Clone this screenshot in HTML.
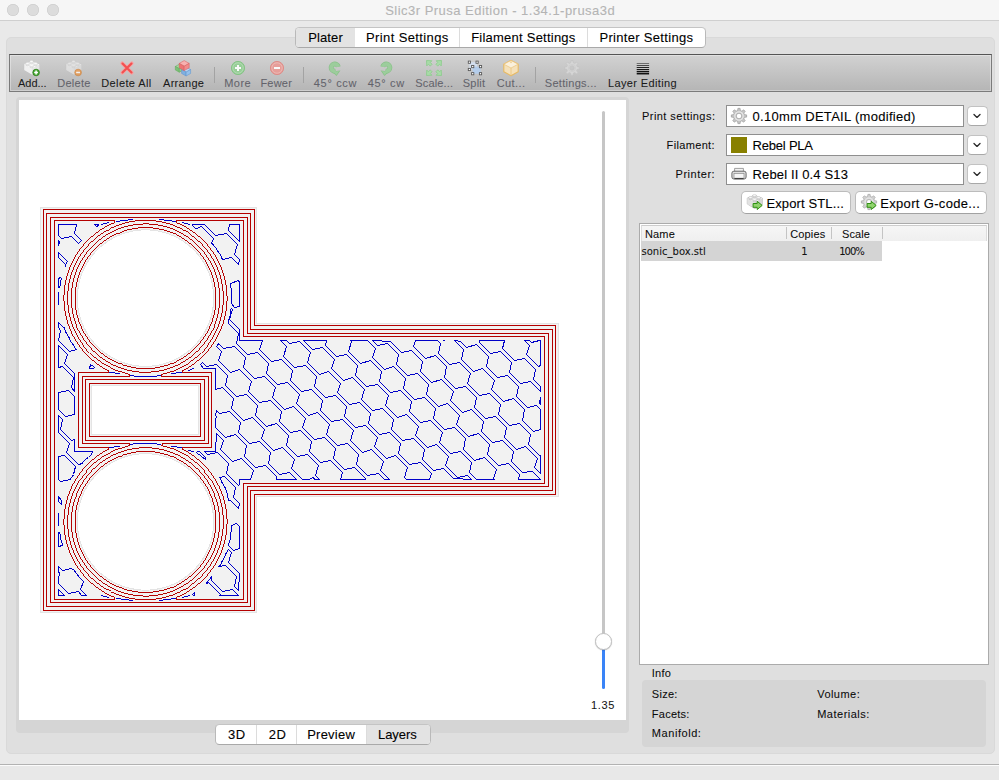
<!DOCTYPE html><html><head><meta charset="utf-8"><title>Slic3r Prusa Edition - 1.34.1-prusa3d</title><style>
html,body{margin:0;padding:0;}
body{width:999px;height:780px;overflow:hidden;background:#e9e9e9;font-family:'Liberation Sans', sans-serif;position:relative;color:#222;}
.abs{position:absolute;}
.t{position:absolute;white-space:nowrap;-webkit-text-stroke:0.06px currentColor;}
#titlebar{left:0;top:0;width:999px;height:20px;background:#f6f6f6;border-bottom:1px solid #cfcfcf;}
.tl{position:absolute;top:4px;width:12px;height:12px;border-radius:50%;background:#dcdcdc;box-shadow:inset 0 0 0 0.5px #c8c8c8;}
#panel{left:6px;top:37px;width:989px;height:717px;background:#dfdfdf;border:1px solid #d9d9d9;border-radius:5px;box-sizing:border-box;}
.segc{position:absolute;background:#fff;border:1px solid #b9b9b9;border-top-color:#c4c4c4;border-bottom-color:#a9a9a9;border-radius:4.5px;box-sizing:border-box;overflow:hidden;}
.seg{position:absolute;top:0;height:100%;box-sizing:border-box;}
.seg.sel{background:#e3e3e3;}
.seg.div{border-left:1px solid #dcdcdc;}
#toolbar{left:9px;top:54px;width:983px;height:38px;box-sizing:border-box;border:1px solid #7b7b7b;border-top-color:#555;background:linear-gradient(#d2d2d2,#b5b5b5);box-shadow:inset 0 0 0 1px rgba(255,255,255,.35);}
.tsep{position:absolute;top:67px;width:1px;height:16px;background:#a3a3a3;}
.ico{position:absolute;width:16px;height:16px;}
#gbox{left:16px;top:97px;width:613px;height:636px;background:#d5d5d5;border-radius:4px;}
#canvas{left:19px;top:100px;width:607px;height:620px;background:#fff;}
.combo{position:absolute;left:726px;width:238px;height:22px;box-sizing:border-box;border:1px solid #8f8f8f;background:#fff;}
.dd{position:absolute;left:967.4px;width:20.3px;height:20px;box-sizing:border-box;border:1px solid #c2c2c2;border-bottom-color:#a8a8a8;border-radius:4.5px;background:#fff;}
.btn{position:absolute;top:190.7px;height:23.5px;box-sizing:border-box;border:1px solid #bcbcbc;border-bottom-color:#a2a2a2;border-radius:5px;background:#fff;}
#list{left:639px;top:223.2px;width:350px;height:442px;box-sizing:border-box;border:1px solid #ababab;background:#fff;}
#lhead{left:641px;top:225px;width:346px;height:16.3px;background:linear-gradient(#f6f6f6,#efefef);border-top:1px solid #cdcdcd;border-left:1px solid #dcdcdc;border-right:1px solid #dcdcdc;box-sizing:border-box;}
.hsep{position:absolute;top:227px;width:1px;height:12px;background:#c4c4c4;}
#row{left:641px;top:241.3px;width:241px;height:19.5px;background:#d4d4d4;}
#info{left:642px;top:680px;width:344px;height:67px;background:#d5d5d5;border-radius:4px;}
#statusline{left:0;top:764px;width:999px;height:1px;background:#b2b2b2;border-bottom:1px solid #fbfbfb;}
#status{left:0;top:766px;width:999px;height:14px;background:#e8e8e8;}
</style></head><body>
<div id="titlebar" class="abs"><div class="tl" style="left:7px"></div><div class="tl" style="left:27px"></div><div class="tl" style="left:47px"></div></div>
<div id="title" class="t" style="left:385.20px;top:2.00px;font:13px/17px 'Liberation Sans', sans-serif;color:#b4b4b4;letter-spacing:0.475px;-webkit-text-stroke-width:0.1px;">Slic3r Prusa Edition - 1.34.1-prusa3d</div>
<div id="panel" class="abs"></div>
<div class="segc abs" style="left:295.4px;top:27px;width:411px;height:20.5px">
<div class="seg sel" style="left:0;width:58.5px"></div>
<div class="seg div" style="left:163px;width:1px"></div>
<div class="seg div" style="left:291px;width:1px"></div>
</div>
<div id="tab0" class="t" style="left:308.20px;top:29.00px;font:13px/17px 'Liberation Sans', sans-serif;color:#000;letter-spacing:0.126px;-webkit-text-stroke-width:0.1px;">Plater</div>
<div id="tab1" class="t" style="left:366.00px;top:29.00px;font:13px/17px 'Liberation Sans', sans-serif;color:#000;letter-spacing:0.381px;-webkit-text-stroke-width:0.1px;">Print Settings</div>
<div id="tab2" class="t" style="left:471.20px;top:29.00px;font:13px/17px 'Liberation Sans', sans-serif;color:#000;letter-spacing:0.231px;-webkit-text-stroke-width:0.1px;">Filament Settings</div>
<div id="tab3" class="t" style="left:599.40px;top:29.00px;font:13px/17px 'Liberation Sans', sans-serif;color:#000;letter-spacing:0.318px;-webkit-text-stroke-width:0.1px;">Printer Settings</div>
<div id="toolbar" class="abs"></div>
<div id="tb0" class="t" style="left:18.00px;top:75.89px;font:11px/14px 'Liberation Sans', sans-serif;color:#1a1a1a;letter-spacing:-0.018px;">Add...</div>
<div class="ico" style="left:24.4px;top:60px"><svg width="16" height="16" viewBox="0 0 16 16" style="position:absolute;left:0;top:0;overflow:visible;"><g opacity="1"><path d="M0.3 4.0 L7.5 1.4 L15.3 4.2 L15.3 10.5 L7.9 14.6 L0.3 9.9Z" fill="#f6f6f6" stroke="#c2c2c2" stroke-width="0.7" stroke-linejoin="round"/><path d="M0.3 4.0 L7.9 8.0 L7.9 14.6 L0.3 9.9Z" fill="#f0f0f0"/><path d="M7.9 8.0 L15.3 4.2 L15.3 10.5 L7.9 14.6Z" fill="#e6e6e6"/><path d="M0.3 4.0 L7.5 1.4 L15.3 4.2 L7.9 8.0Z" fill="#fdfdfd"/><path d="M5.75 1.3 v1.5 a1.75 0.85 0 0 0 3.5 0 v-1.5z" fill="#e4e4e4" stroke="#c4c4c4" stroke-width="0.4"/><ellipse cx="7.5" cy="1.3" rx="1.75" ry="0.85" fill="#ffffff" stroke="#d2d2d2" stroke-width="0.35"/><path d="M1.75 3.3 v1.5 a1.75 0.85 0 0 0 3.5 0 v-1.5z" fill="#e4e4e4" stroke="#c4c4c4" stroke-width="0.4"/><ellipse cx="3.5" cy="3.3" rx="1.75" ry="0.85" fill="#ffffff" stroke="#d2d2d2" stroke-width="0.35"/><path d="M9.85 3.4 v1.5 a1.75 0.85 0 0 0 3.5 0 v-1.5z" fill="#e4e4e4" stroke="#c4c4c4" stroke-width="0.4"/><ellipse cx="11.6" cy="3.4" rx="1.75" ry="0.85" fill="#ffffff" stroke="#d2d2d2" stroke-width="0.35"/><path d="M5.85 5.5 v1.5 a1.75 0.85 0 0 0 3.5 0 v-1.5z" fill="#e4e4e4" stroke="#c4c4c4" stroke-width="0.4"/><ellipse cx="7.6" cy="5.5" rx="1.75" ry="0.85" fill="#ffffff" stroke="#d2d2d2" stroke-width="0.35"/></g><circle cx="12.1" cy="12.5" r="3.3" fill="#46a833" stroke="#2d7f1c" stroke-width="0.8"/><path d="M10.186 12.5H14.014" stroke="#fff" stroke-width="1.5"/><path d="M12.1 10.586V14.414" stroke="#fff" stroke-width="1.5"/></svg></div>
<div id="tb1" class="t" style="left:57.20px;top:75.89px;font:11px/14px 'Liberation Sans', sans-serif;color:#63636b;letter-spacing:0.288px;">Delete</div>
<div class="ico" style="left:65.9px;top:60px"><svg width="16" height="16" viewBox="0 0 16 16" style="position:absolute;left:0;top:0;overflow:visible;"><g opacity="0.55"><path d="M0.3 4.0 L7.5 1.4 L15.3 4.2 L15.3 10.5 L7.9 14.6 L0.3 9.9Z" fill="#f6f6f6" stroke="#c2c2c2" stroke-width="0.7" stroke-linejoin="round"/><path d="M0.3 4.0 L7.9 8.0 L7.9 14.6 L0.3 9.9Z" fill="#f0f0f0"/><path d="M7.9 8.0 L15.3 4.2 L15.3 10.5 L7.9 14.6Z" fill="#e6e6e6"/><path d="M0.3 4.0 L7.5 1.4 L15.3 4.2 L7.9 8.0Z" fill="#fdfdfd"/><path d="M5.75 1.3 v1.5 a1.75 0.85 0 0 0 3.5 0 v-1.5z" fill="#e4e4e4" stroke="#c4c4c4" stroke-width="0.4"/><ellipse cx="7.5" cy="1.3" rx="1.75" ry="0.85" fill="#ffffff" stroke="#d2d2d2" stroke-width="0.35"/><path d="M1.75 3.3 v1.5 a1.75 0.85 0 0 0 3.5 0 v-1.5z" fill="#e4e4e4" stroke="#c4c4c4" stroke-width="0.4"/><ellipse cx="3.5" cy="3.3" rx="1.75" ry="0.85" fill="#ffffff" stroke="#d2d2d2" stroke-width="0.35"/><path d="M9.85 3.4 v1.5 a1.75 0.85 0 0 0 3.5 0 v-1.5z" fill="#e4e4e4" stroke="#c4c4c4" stroke-width="0.4"/><ellipse cx="11.6" cy="3.4" rx="1.75" ry="0.85" fill="#ffffff" stroke="#d2d2d2" stroke-width="0.35"/><path d="M5.85 5.5 v1.5 a1.75 0.85 0 0 0 3.5 0 v-1.5z" fill="#e4e4e4" stroke="#c4c4c4" stroke-width="0.4"/><ellipse cx="7.6" cy="5.5" rx="1.75" ry="0.85" fill="#ffffff" stroke="#d2d2d2" stroke-width="0.35"/></g><g opacity="0.75"><circle cx="12.1" cy="12.5" r="3.3" fill="#e8913f" stroke="#cf7a2a" stroke-width="0.8"/><path d="M10.186 12.5H14.014" stroke="#fff" stroke-width="1.5"/></g></svg></div>
<div id="tb2" class="t" style="left:101.20px;top:75.89px;font:11px/14px 'Liberation Sans', sans-serif;color:#1a1a1a;letter-spacing:0.400px;">Delete All</div>
<div class="ico" style="left:119.0px;top:60px"><svg width="16" height="16" viewBox="0 0 16 16" style="position:absolute;left:0;top:0;overflow:visible;"><path d="M3.2 3.2 L12.8 12.8 M12.8 3.2 L3.2 12.8" stroke="#f8a0a0" stroke-width="3.6" stroke-linecap="round"/><path d="M3.5 3.5 L12.5 12.5 M12.5 3.5 L3.5 12.5" stroke="#f25050" stroke-width="2.1" stroke-linecap="round"/></svg></div>
<div id="tb3" class="t" style="left:163.00px;top:75.89px;font:11px/14px 'Liberation Sans', sans-serif;color:#1a1a1a;letter-spacing:0.300px;">Arrange</div>
<div class="ico" style="left:175.0px;top:60px"><svg width="16" height="16" viewBox="0 0 16 16" style="position:absolute;left:0;top:0;overflow:visible;"><path d="M0.3 6.44 L4.3 4.2 L8.3 6.44 L4.3 8.68Z" fill="#a5d6a0" stroke="#5da858" stroke-width="0.5" stroke-linejoin="round"/><path d="M0.3 6.44 L4.3 8.68 L4.3 12.2 L0.3 9.959999999999999Z" fill="#7cc077" stroke="#5da858" stroke-width="0.5" stroke-linejoin="round"/><path d="M8.3 6.44 L4.3 8.68 L4.3 12.2 L8.3 9.959999999999999Z" fill="#8fcc8a" stroke="#5da858" stroke-width="0.5" stroke-linejoin="round"/><path d="M6.6 9.52 L11.1 7.0 L15.6 9.52 L11.1 12.040000000000001Z" fill="#b9d6f2" stroke="#5d93cc" stroke-width="0.5" stroke-linejoin="round"/><path d="M6.6 9.52 L11.1 12.040000000000001 L11.1 16.0 L6.6 13.48Z" fill="#7fb0e0" stroke="#5d93cc" stroke-width="0.5" stroke-linejoin="round"/><path d="M15.6 9.52 L11.1 12.040000000000001 L11.1 16.0 L15.6 13.48Z" fill="#96c0ea" stroke="#5d93cc" stroke-width="0.5" stroke-linejoin="round"/><path d="M4.2 3.4000000000000004 L9.2 0.6 L14.2 3.4000000000000004 L9.2 6.2Z" fill="#f7b1b1" stroke="#d85a5a" stroke-width="0.5" stroke-linejoin="round"/><path d="M4.2 3.4000000000000004 L9.2 6.2 L9.2 10.6 L4.2 7.799999999999999Z" fill="#ec7474" stroke="#d85a5a" stroke-width="0.5" stroke-linejoin="round"/><path d="M14.2 3.4000000000000004 L9.2 6.2 L9.2 10.6 L14.2 7.799999999999999Z" fill="#f18c8c" stroke="#d85a5a" stroke-width="0.5" stroke-linejoin="round"/></svg></div>
<div id="tb4" class="t" style="left:224.20px;top:75.89px;font:11px/14px 'Liberation Sans', sans-serif;color:#63636b;letter-spacing:0.480px;">More</div>
<div class="ico" style="left:230.0px;top:60px"><svg width="16" height="16" viewBox="0 0 16 16" style="position:absolute;left:0;top:0;overflow:visible;"><g opacity="0.9"><circle cx="8" cy="8" r="6.6" fill="#93cf93" stroke="#7fc37f" stroke-width="1"/><circle cx="8" cy="8" r="5.2" fill="none" stroke="#b5e0b5" stroke-width="0.8"/><path d="M5 8H11M8 5V11" stroke="#fff" stroke-width="2"/></g></svg></div>
<div id="tb5" class="t" style="left:260.40px;top:75.89px;font:11px/14px 'Liberation Sans', sans-serif;color:#63636b;letter-spacing:0.225px;">Fewer</div>
<div class="ico" style="left:269.0px;top:60px"><svg width="16" height="16" viewBox="0 0 16 16" style="position:absolute;left:0;top:0;overflow:visible;"><g opacity="0.9"><circle cx="8" cy="8" r="6.6" fill="#ea9a95" stroke="#e08883" stroke-width="1"/><circle cx="8" cy="8" r="5.2" fill="none" stroke="#f3bcb8" stroke-width="0.8"/><path d="M5 8H11" stroke="#fff" stroke-width="2"/></g></svg></div>
<div id="tb6" class="t" style="left:313.80px;top:75.89px;font:11px/14px 'Liberation Sans', sans-serif;color:#63636b;letter-spacing:0.675px;">45° ccw</div>
<div class="ico" style="left:327.0px;top:60px"><svg width="16" height="16" viewBox="0 0 16 16" style="position:absolute;left:0;top:0;overflow:visible;"><g ><path d="M11.29 6.73 A3.6 3.6 0 1 0 8.73 11.08" fill="none" stroke="#88c088" stroke-width="4.9"/><path d="M5.0 11.4 L13.4 10.4 L9.5 16.0Z" fill="#88c088"/><path d="M11.29 6.73 A3.6 3.6 0 1 0 8.73 11.08" fill="none" stroke="#9ccd9c" stroke-width="3.7"/><path d="M6.2 11.8 L12.2 11.0 L9.45 15.0Z" fill="#9ccd9c"/></g></svg></div>
<div id="tb7" class="t" style="left:367.84px;top:75.89px;font:11px/14px 'Liberation Sans', sans-serif;color:#63636b;letter-spacing:0.648px;">45° cw</div>
<div class="ico" style="left:378.0px;top:60px"><svg width="16" height="16" viewBox="0 0 16 16" style="position:absolute;left:0;top:0;overflow:visible;"><g transform="translate(16,0) scale(-1,1)"><path d="M11.29 6.73 A3.6 3.6 0 1 0 8.73 11.08" fill="none" stroke="#88c088" stroke-width="4.9"/><path d="M5.0 11.4 L13.4 10.4 L9.5 16.0Z" fill="#88c088"/><path d="M11.29 6.73 A3.6 3.6 0 1 0 8.73 11.08" fill="none" stroke="#9ccd9c" stroke-width="3.7"/><path d="M6.2 11.8 L12.2 11.0 L9.45 15.0Z" fill="#9ccd9c"/></g></svg></div>
<div id="tb8" class="t" style="left:415.20px;top:75.89px;font:11px/14px 'Liberation Sans', sans-serif;color:#63636b;letter-spacing:0.180px;">Scale...</div>
<div class="ico" style="left:426.0px;top:60px"><svg width="16" height="16" viewBox="0 0 16 16" style="position:absolute;left:0;top:0;overflow:visible;"><g transform="rotate(45 8 8)"><path d="M8 -2.6 L11.6 1.4 H9.3 V4.0 H6.7 V1.4 H4.4Z" fill="#a9dba9" stroke="#86cc86" stroke-width="0.7" stroke-linejoin="round"/></g><g transform="rotate(135 8 8)"><path d="M8 -2.6 L11.6 1.4 H9.3 V4.0 H6.7 V1.4 H4.4Z" fill="#a9dba9" stroke="#86cc86" stroke-width="0.7" stroke-linejoin="round"/></g><g transform="rotate(225 8 8)"><path d="M8 -2.6 L11.6 1.4 H9.3 V4.0 H6.7 V1.4 H4.4Z" fill="#a9dba9" stroke="#86cc86" stroke-width="0.7" stroke-linejoin="round"/></g><g transform="rotate(315 8 8)"><path d="M8 -2.6 L11.6 1.4 H9.3 V4.0 H6.7 V1.4 H4.4Z" fill="#a9dba9" stroke="#86cc86" stroke-width="0.7" stroke-linejoin="round"/></g></svg></div>
<div id="tb9" class="t" style="left:462.80px;top:75.89px;font:11px/14px 'Liberation Sans', sans-serif;color:#63636b;letter-spacing:0.225px;">Split</div>
<div class="ico" style="left:467.0px;top:60px"><svg width="16" height="16" viewBox="0 0 16 16" style="position:absolute;left:0;top:0;overflow:visible;"><rect x="2.4" y="2.2" width="7.7" height="7.3" fill="#d3e0f2" opacity="0.9"/><rect x="5.7" y="6.6" width="7.8" height="7.1" fill="#b4cdeb"/><rect x="1.2999999999999998" y="1.1" width="2.2" height="2.2" fill="#fff" stroke="#5a5a5a" stroke-width="0.9"/><rect x="9.0" y="1.1" width="2.2" height="2.2" fill="#fff" stroke="#5a5a5a" stroke-width="0.9"/><rect x="1.2999999999999998" y="8.4" width="2.2" height="2.2" fill="#fff" stroke="#5a5a5a" stroke-width="0.9"/><rect x="4.6" y="5.5" width="2.2" height="2.2" fill="#fff" stroke="#5a5a5a" stroke-width="0.9"/><rect x="12.4" y="5.5" width="2.2" height="2.2" fill="#fff" stroke="#5a5a5a" stroke-width="0.9"/><rect x="4.6" y="12.6" width="2.2" height="2.2" fill="#fff" stroke="#5a5a5a" stroke-width="0.9"/><rect x="12.4" y="12.6" width="2.2" height="2.2" fill="#fff" stroke="#5a5a5a" stroke-width="0.9"/></svg></div>
<div id="tb10" class="t" style="left:496.76px;top:75.89px;font:11px/14px 'Liberation Sans', sans-serif;color:#63636b;letter-spacing:0.396px;">Cut...</div>
<div class="ico" style="left:502.8px;top:60px"><svg width="16" height="16" viewBox="0 0 16 16" style="position:absolute;left:0;top:0;overflow:visible;"><g opacity="0.95"><path d="M8 0.4 L15.2 4.2 V11.8 L8 15.8 L0.8 11.8 V4.2Z" fill="#f8e3bb" stroke="#e9b95f" stroke-width="1.1" stroke-linejoin="round"/><path d="M0.8 4.2 L8 8 L15.2 4.2 L8 0.4Z" fill="#fdf3df" stroke="#ecc377" stroke-width="0.7" stroke-linejoin="round"/><path d="M8 8V15.8" stroke="#ecc377" stroke-width="0.8"/><path d="M6.4 1.4 L8 3.4 L9.6 1.4" fill="#f1cf8c"/></g></svg></div>
<div id="tb11" class="t" style="left:544.80px;top:75.89px;font:11px/14px 'Liberation Sans', sans-serif;color:#63636b;letter-spacing:0.288px;">Settings...</div>
<div class="ico" style="left:564.2px;top:60px"><svg width="16" height="16" viewBox="0 0 16 16" style="position:absolute;left:0;top:0;overflow:visible;"><path d="M6.74 2.75 L6.96 0.67 L9.04 0.67 L9.26 2.75 L10.82 3.40 L12.44 2.08 L13.92 3.56 L12.60 5.18 L13.25 6.74 L15.33 6.96 L15.33 9.04 L13.25 9.26 L12.60 10.82 L13.92 12.44 L12.44 13.92 L10.82 12.60 L9.26 13.25 L9.04 15.33 L6.96 15.33 L6.74 13.25 L5.18 12.60 L3.56 13.92 L2.08 12.44 L3.40 10.82 L2.75 9.26 L0.67 9.04 L0.67 6.96 L2.75 6.74 L3.40 5.18 L2.08 3.56 L3.56 2.08 L5.18 3.40ZM10.3 8A2.3 2.3 0 1 0 5.7 8A2.3 2.3 0 1 0 10.3 8Z" fill="#d6d6d6" stroke="#c3c3c3" stroke-width="0.7" fill-rule="evenodd" stroke-linejoin="round"/><circle cx="8" cy="8" r="3.5999999999999996" fill="none" stroke="#c9c9c9" stroke-width="0.6"/></svg></div>
<div id="tb12" class="t" style="left:608.00px;top:75.89px;font:11px/14px 'Liberation Sans', sans-serif;color:#1a1a1a;letter-spacing:0.368px;">Layer Editing</div>
<div class="ico" style="left:635.0px;top:60px"><svg width="16" height="16" viewBox="0 0 16 16" style="position:absolute;left:0;top:0;overflow:visible;"><rect x="1.7" y="3.15" width="12.4" height="0.5" fill="#111"/><rect x="1.7" y="5.11" width="12.4" height="0.7" fill="#111"/><rect x="1.7" y="7.07" width="12.4" height="0.9" fill="#111"/><rect x="1.7" y="9.03" width="12.4" height="1.1" fill="#111"/><rect x="1.7" y="10.99" width="12.4" height="1.3" fill="#111"/><rect x="1.7" y="12.95" width="12.4" height="1.5" fill="#111"/></svg></div>
<div class="tsep" style="left:213.7px"></div>
<div class="tsep" style="left:303.2px"></div>
<div class="tsep" style="left:535.3px"></div>
<div id="gbox" class="abs"></div><div id="canvas" class="abs"></div>
<svg class="abs" style="left:0;top:0" width="999" height="780" viewBox="0 0 999 780" shape-rendering="crispEdges">
<path d="M40.9,612.5 256.8,612.5 256.8,496.5 558.2,496.5 558.2,323.4 256.8,323.4 256.8,207.4 40.9,207.4ZM213.7,298.1 213.6,302.6 213.1,307 212.4,311.4 211.4,315.8 210.1,320 208.5,324.2 206.7,328.3 204.6,332.2 202.2,336 199.6,339.6 196.8,343.1 193.7,346.3 190.5,349.4 187,352.2 183.4,354.8 179.6,357.2 175.7,359.3 171.6,361.1 167.4,362.7 163.2,364 158.8,365 154.4,365.7 150,366.2 145.5,366.3 141,366.2 136.6,365.7 132.2,365 127.8,364 123.6,362.7 119.4,361.1 115.3,359.3 111.4,357.2 107.6,354.8 104,352.2 100.5,349.4 97.3,346.3 94.2,343.1 91.4,339.6 88.8,336 86.4,332.2 84.3,328.3 82.5,324.2 80.9,320 79.6,315.8 78.6,311.4 77.9,307 77.4,302.6 77.3,298.1 77.4,293.6 77.9,289.2 78.6,284.8 79.6,280.4 80.9,276.2 82.5,272 84.3,267.9 86.4,264 88.8,260.2 91.4,256.6 94.2,253.1 97.3,249.9 100.5,246.8 104,244 107.6,241.4 111.4,239 115.3,236.9 119.4,235.1 123.6,233.5 127.8,232.2 132.2,231.2 136.6,230.5 141,230 145.5,229.9 150,230 154.4,230.5 158.8,231.2 163.2,232.2 167.4,233.5 171.6,235.1 175.7,236.9 179.6,239 183.4,241.4 187,244 190.5,246.8 193.7,249.9 196.8,253.1 199.6,256.6 202.2,260.2 204.6,264 206.7,267.9 208.5,272 210.1,276.2 211.4,280.4 212.4,284.8 213.1,289.2 213.6,293.6ZM91.8,385.8 198.6,385.8 198.6,434.2 91.8,434.2ZM213.6,517.4 213.7,521.9 213.6,526.4 213.1,530.8 212.4,535.2 211.4,539.6 210.1,543.8 208.5,548 206.7,552.1 204.6,556 202.2,559.8 199.6,563.4 196.8,566.9 193.7,570.1 190.5,573.2 187,576 183.4,578.6 179.6,581 175.7,583.1 171.6,584.9 167.4,586.5 163.2,587.8 158.8,588.8 154.4,589.5 150,590 145.5,590.1 141,590 136.6,589.5 132.2,588.8 127.8,587.8 123.6,586.5 119.4,584.9 115.3,583.1 111.4,581 107.6,578.6 104,576 100.5,573.2 97.3,570.1 94.2,566.9 91.4,563.4 88.8,559.8 86.4,556 84.3,552.1 82.5,548 80.9,543.8 79.6,539.6 78.6,535.2 77.9,530.8 77.4,526.4 77.3,521.9 77.4,517.4 77.9,513 78.6,508.6 79.6,504.2 80.9,500 82.5,495.8 84.3,491.7 86.4,487.8 88.8,484 91.4,480.4 94.2,476.9 97.3,473.7 100.5,470.6 104,467.8 107.6,465.2 111.4,462.8 115.3,460.7 119.4,458.9 123.6,457.3 127.8,456 132.2,455 136.6,454.3 141,453.8 145.5,453.7 150,453.8 154.4,454.3 158.8,455 163.2,456 167.4,457.3 171.6,458.9 175.7,460.7 179.6,462.8 183.4,465.2 187,467.8 190.5,470.6 193.7,473.7 196.8,476.9 199.6,480.4 202.2,484 204.6,487.8 206.7,491.7 208.5,495.8 210.1,500 211.4,504.2 212.4,508.6 213.1,513Z" fill="#f2f2f2" stroke="#e4e4e4" stroke-width="1" fill-rule="evenodd"/>
<path d="M61.5,504.5 61.5,502.5 61.5,500.5 58.5,496.5 58.5,501.5ZM62.5,545.5 62.5,544.5 61.5,541.5 60.5,538.5 60.5,535.5 59.5,532.5 58.5,532.5 58.5,546.5ZM59.5,573.5 58.5,579.5 58.5,583.5 68.5,593.5 78.5,591.5 81.5,595.5 86.5,595.5 80.5,589.5 83.5,581.5 82.5,580.5 80.5,578.5 78.5,576.5 77.5,574.5 75.5,572.5 74.5,570.5 71.5,568.5 62.5,570.5 58.5,566.5 58.5,571.5ZM58.5,589.5 58.5,595.5 64.5,595.5ZM529.5,345.5 526.5,354.5 538.5,366.5 540.5,365.5 540.5,340.5 539.5,340.5 531.5,342.5 529.5,340.5 524.5,340.5ZM479.5,342.5 490.5,353.5 500.5,351.5 511.5,362.5 509.5,372.5 520.5,383.5 530.5,381.5 540.5,391.5 540.5,386.5 533.5,379.5 535.5,369.5 524.5,358.5 514.5,360.5 502.5,348.5 504.5,340.5 479.5,340.5ZM539.5,402.5 540.5,404.5 540.5,397.5ZM442.5,340.5 444.5,340.5ZM463.5,349.5 461.5,359.5 473.5,371.5 482.5,368.5 494.5,380.5 491.5,389.5 503.5,401.5 513.5,398.5 524.5,409.5 522.5,420.5 533.5,431.5 540.5,429.5 540.5,409.5 536.5,405.5 527.5,407.5 516.5,396.5 518.5,386.5 507.5,375.5 497.5,377.5 486.5,366.5 488.5,356.5 476.5,344.5 466.5,347.5 460.5,341.5 454.5,340.5ZM413.5,346.5 425.5,358.5 435.5,355.5 446.5,366.5 444.5,377.5 455.5,388.5 465.5,386.5 476.5,397.5 474.5,407.5 485.5,418.5 495.5,416.5 506.5,427.5 504.5,437.5 516.5,449.5 525.5,446.5 537.5,458.5 534.5,467.5 540.5,473.5 540.5,455.5 539.5,455.5 528.5,444.5 530.5,434.5 519.5,423.5 509.5,425.5 498.5,414.5 500.5,404.5 489.5,393.5 479.5,395.5 467.5,383.5 470.5,373.5 459.5,362.5 449.5,364.5 438.5,353.5 440.5,343.5 437.5,340.5 415.5,340.5ZM377.5,345.5 387.5,343.5 398.5,354.5 396.5,364.5 407.5,375.5 417.5,373.5 428.5,384.5 426.5,394.5 438.5,406.5 447.5,403.5 459.5,415.5 456.5,424.5 468.5,436.5 478.5,433.5 489.5,444.5 487.5,454.5 498.5,465.5 508.5,463.5 519.5,474.5 518.5,479.5 540.5,479.5 532.5,471.5 522.5,472.5 511.5,461.5 513.5,451.5 502.5,440.5 492.5,442.5 481.5,431.5 483.5,421.5 471.5,409.5 462.5,412.5 450.5,400.5 453.5,391.5 441.5,379.5 431.5,382.5 420.5,371.5 422.5,361.5 411.5,350.5 401.5,352.5 390.5,341.5 372.5,340.5ZM228.5,230.5 239.5,241.5 239.5,224.5 229.5,224.5ZM351.5,341.5 348.5,351.5 360.5,363.5 370.5,360.5 381.5,371.5 379.5,381.5 390.5,392.5 400.5,390.5 411.5,401.5 409.5,411.5 420.5,422.5 430.5,420.5 442.5,432.5 439.5,442.5 450.5,453.5 460.5,451.5 471.5,462.5 469.5,472.5 476.5,479.5 494.5,479.5 493.5,478.5 496.5,469.5 484.5,457.5 474.5,460.5 463.5,449.5 465.5,438.5 454.5,427.5 444.5,429.5 433.5,418.5 435.5,408.5 424.5,397.5 414.5,399.5 403.5,388.5 405.5,378.5 393.5,366.5 384.5,369.5 372.5,357.5 375.5,348.5 367.5,340.5 350.5,340.5ZM201.5,226.5 213.5,238.5 211.5,243.5 212.5,243.5 213.5,245.5 215.5,247.5 217.5,250.5 218.5,252.5 220.5,254.5 221.5,257.5 222.5,259.5 231.5,257.5 238.5,264.5 239.5,259.5 234.5,254.5 237.5,244.5 226.5,233.5 215.5,235.5 204.5,224.5 192.5,224.5 192.5,225.5 195.5,228.5 196.5,228.5ZM312.5,349.5 322.5,347.5 334.5,359.5 331.5,368.5 343.5,380.5 352.5,377.5 364.5,389.5 361.5,399.5 372.5,410.5 382.5,408.5 393.5,419.5 391.5,429.5 402.5,440.5 413.5,438.5 424.5,449.5 422.5,459.5 433.5,470.5 443.5,468.5 453.5,478.5 471.5,479.5 467.5,475.5 457.5,477.5 445.5,465.5 448.5,456.5 436.5,444.5 427.5,447.5 415.5,435.5 418.5,426.5 406.5,414.5 397.5,417.5 385.5,405.5 388.5,395.5 377.5,384.5 366.5,386.5 355.5,375.5 357.5,365.5 346.5,354.5 336.5,356.5 325.5,345.5 326.5,340.5 303.5,340.5ZM234.5,307.5 239.5,306.5 239.5,282.5 238.5,280.5 230.5,283.5 230.5,284.5 230.5,286.5 231.5,289.5 231.5,292.5 231.5,295.5 231.5,298.5 231.5,300.5 231.5,303.5ZM286.5,346.5 283.5,356.5 294.5,367.5 305.5,365.5 316.5,376.5 314.5,386.5 325.5,397.5 335.5,395.5 346.5,406.5 344.5,416.5 355.5,427.5 365.5,425.5 377.5,437.5 374.5,446.5 386.5,458.5 395.5,455.5 407.5,467.5 404.5,477.5 406.5,479.5 429.5,479.5 431.5,473.5 420.5,462.5 409.5,464.5 398.5,453.5 400.5,443.5 389.5,432.5 379.5,434.5 368.5,423.5 370.5,413.5 359.5,402.5 349.5,404.5 337.5,392.5 340.5,383.5 328.5,371.5 319.5,374.5 307.5,362.5 310.5,352.5 299.5,341.5 289.5,343.5 286.5,340.5 280.5,340.5ZM238.5,333.5 236.5,343.5 247.5,354.5 257.5,352.5 268.5,363.5 266.5,373.5 277.5,384.5 287.5,382.5 299.5,394.5 296.5,403.5 308.5,415.5 317.5,412.5 329.5,424.5 326.5,434.5 337.5,445.5 347.5,443.5 358.5,454.5 356.5,464.5 367.5,475.5 378.5,473.5 384.5,479.5 389.5,479.5 380.5,470.5 383.5,461.5 371.5,449.5 362.5,452.5 350.5,440.5 353.5,430.5 342.5,419.5 331.5,421.5 320.5,410.5 322.5,400.5 311.5,389.5 301.5,391.5 290.5,380.5 292.5,370.5 281.5,359.5 271.5,361.5 259.5,349.5 262.5,340.5 239.5,340.5 239.5,329.5 229.5,319.5 232.5,309.5 231.5,308.5 230.5,309.5 230.5,312.5 230.5,314.5 229.5,317.5 228.5,320.5 228.5,323.5ZM96.5,226.5 98.5,225.5 98.5,224.5 94.5,224.5ZM221.5,351.5 218.5,360.5 230.5,372.5 239.5,369.5 251.5,381.5 248.5,391.5 259.5,402.5 270.5,400.5 281.5,411.5 279.5,421.5 290.5,432.5 300.5,430.5 311.5,441.5 309.5,451.5 320.5,462.5 330.5,460.5 342.5,472.5 340.5,479.5 365.5,479.5 365.5,478.5 354.5,467.5 344.5,469.5 333.5,458.5 335.5,448.5 324.5,437.5 314.5,439.5 302.5,427.5 305.5,418.5 293.5,406.5 284.5,409.5 272.5,397.5 275.5,387.5 264.5,376.5 254.5,378.5 243.5,367.5 245.5,357.5 234.5,346.5 223.5,348.5 218.5,343.5 217.5,345.5 216.5,346.5ZM61.5,238.5 71.5,236.5 78.5,243.5 80.5,241.5 81.5,240.5 74.5,233.5 76.5,224.5 58.5,224.5 58.5,235.5ZM203.5,368.5 215.5,368.5 215.5,389.5 222.5,387.5 233.5,398.5 231.5,408.5 243.5,420.5 252.5,417.5 264.5,429.5 261.5,438.5 273.5,450.5 282.5,447.5 294.5,459.5 291.5,468.5 302.5,479.5 308.5,479.5 313.5,477.5 314.5,479.5 319.5,479.5 315.5,475.5 318.5,465.5 307.5,454.5 297.5,456.5 286.5,445.5 288.5,435.5 276.5,423.5 266.5,426.5 255.5,415.5 257.5,405.5 246.5,394.5 236.5,396.5 225.5,385.5 227.5,375.5 216.5,364.5 206.5,366.5 202.5,362.5 200.5,364.5ZM65.5,264.5 65.5,266.5 65.5,265.5 66.5,262.5 67.5,261.5 58.5,252.5 58.5,257.5ZM216.5,416.5 215.5,419.5 215.5,427.5 225.5,437.5 235.5,434.5 246.5,445.5 244.5,456.5 255.5,467.5 265.5,465.5 276.5,476.5 276.5,479.5 296.5,479.5 289.5,472.5 279.5,474.5 268.5,463.5 270.5,452.5 259.5,441.5 249.5,443.5 238.5,432.5 240.5,422.5 229.5,411.5 219.5,413.5 216.5,410.5 215.5,415.5ZM59.5,241.5 58.5,240.5 58.5,245.5ZM207.5,454.5 217.5,452.5 228.5,463.5 226.5,473.5 238.5,485.5 239.5,484.5 239.5,479.5 250.5,479.5 253.5,470.5 241.5,458.5 232.5,461.5 220.5,449.5 223.5,440.5 216.5,433.5 215.5,451.5 204.5,451.5ZM60.5,277.5 58.5,278.5 58.5,287.5 59.5,287.5 60.5,284.5 60.5,281.5 61.5,278.5ZM60.5,330.5 58.5,340.5 69.5,351.5 76.5,349.5 75.5,348.5 73.5,345.5 72.5,343.5 70.5,341.5 69.5,338.5 68.5,336.5 66.5,333.5 65.5,331.5 64.5,328.5 64.5,327.5 63.5,327.5 58.5,322.5 58.5,327.5ZM89.5,368.5 93.5,368.5 94.5,367.5 93.5,366.5 90.5,364.5ZM230.5,500.5 238.5,508.5 239.5,503.5 233.5,497.5 235.5,487.5 224.5,476.5 219.5,477.5 220.5,478.5 221.5,481.5 222.5,483.5 224.5,486.5 225.5,488.5 226.5,491.5 227.5,494.5 227.5,496.5 228.5,499.5 228.5,500.5ZM205.5,457.5 199.5,451.5 197.5,451.5 196.5,452.5 197.5,453.5 200.5,455.5 202.5,457.5 204.5,458.5 205.5,459.5ZM62.5,366.5 73.5,377.5 71.5,387.5 74.5,391.5 74.5,373.5 64.5,363.5 67.5,354.5 58.5,345.5 58.5,367.5ZM233.5,550.5 239.5,548.5 239.5,526.5 236.5,523.5 231.5,525.5 231.5,527.5 231.5,530.5 230.5,533.5 230.5,535.5 230.5,538.5 229.5,541.5 228.5,544.5 228.5,545.5ZM65.5,416.5 74.5,414.5 74.5,396.5 68.5,390.5 58.5,392.5 58.5,409.5ZM225.5,565.5 236.5,576.5 234.5,586.5 238.5,590.5 239.5,573.5 228.5,562.5 231.5,552.5 228.5,549.5 226.5,552.5 225.5,554.5 224.5,557.5 222.5,560.5 221.5,562.5 220.5,565.5 218.5,566.5ZM69.5,443.5 66.5,452.5 78.5,464.5 82.5,463.5 82.5,462.5 84.5,460.5 86.5,458.5 88.5,457.5 90.5,455.5 91.5,454.5 92.5,451.5 74.5,451.5 74.5,439.5 71.5,440.5 60.5,429.5 62.5,419.5 58.5,415.5 58.5,432.5ZM208.5,582.5 220.5,594.5 219.5,595.5 238.5,595.5 232.5,589.5 222.5,591.5 211.5,580.5 211.5,576.5 210.5,578.5 208.5,580.5 206.5,582.5 206.5,583.5ZM60.5,481.5 70.5,479.5 70.5,478.5 72.5,476.5 73.5,474.5 75.5,466.5 64.5,455.5 58.5,456.5 58.5,479.5ZM194.5,592.5 192.5,594.5 193.5,595.5 194.5,595.5Z" fill="none" stroke="#0000c8" stroke-width="1"/>
<path d="M101.5,224.5 108.5,222.5M101.5,595.5 108.5,597.5M116.5,221.5 124.5,220.5 132.5,219.5M116.5,598.5 124.5,599.5 132.5,600.5M159.5,219.5 167.5,220.5 175.5,221.5M159.5,600.5 167.5,599.5 175.5,598.5M182.5,222.5 189.5,224.5M182.5,597.5 189.5,595.5M109.5,372.5 119.5,373.5M109.5,447.5 119.5,446.5M129.5,375.5 137.5,376.5 145.5,376.5 153.5,376.5 160.5,375.5M129.5,444.5 137.5,443.5 145.5,443.5 153.5,443.5 160.5,444.5M171.5,373.5 181.5,372.5M171.5,446.5 181.5,447.5M188.5,370.5 193.5,368.5M188.5,450.5 193.5,451.5M58.5,292.5 58.5,304.5M58.5,513.5 58.5,525.5" fill="none" stroke="#0000c8" stroke-width="1" stroke-linecap="square"/>
<path d="M43.5,610.5 254.5,610.5 254.5,494.5 555.5,494.5 555.5,325.5 254.5,325.5 254.5,209.5 43.5,209.5 43.5,610.5M89.5,383.5 200.5,383.5 200.5,436.5 89.5,436.5 89.5,383.5M46.5,606.5 250.5,606.5 250.5,490.5 552.5,490.5 552.5,329.5 250.5,329.5 250.5,213.5 46.5,213.5 46.5,606.5M85.5,379.5 204.5,379.5 204.5,440.5 85.5,440.5 85.5,379.5M50.5,602.5 247.5,602.5 247.5,486.5 548.5,486.5 548.5,333.5 247.5,333.5 247.5,217.5 50.5,217.5 50.5,602.5M82.5,376.5 129,376.5M162,376.5 208.5,376.5 208.5,443.5 162,443.5M129,443.5 82.5,443.5 82.5,376.5M182.6,372.5 211.5,372.5 211.5,447.5 182.6,447.5M176.5,599.5 243.5,599.5 243.5,483.5 544.5,483.5 544.5,336.5 243.5,336.5 243.5,220.5 176.3,220.5M54.5,599.5 114.5,599.5M108.4,447.5 78.5,447.5 78.5,372.5 108.4,372.5M114.7,220.5 54.5,220.5 54.5,599.5" fill="none" stroke="#b40000" stroke-width="1" stroke-linecap="square"/>
<path d="M215.9,517.3 216,521.9 215.9,526.5 215.4,531.1 214.6,535.7 213.6,540.1 212.3,544.6 210.6,548.9 208.7,553.1 206.6,557.2 204.1,561.1 201.4,564.8 198.5,568.4 195.4,571.8 192,574.9 188.4,577.8 184.7,580.5 180.8,583 176.7,585.1 172.5,587 168.2,588.7 163.7,590 159.3,591 154.7,591.8 150.1,592.3 145.5,592.4 140.9,592.3 136.3,591.8 131.7,591 127.3,590 122.8,588.7 118.5,587 114.3,585.1 110.2,583 106.3,580.5 102.6,577.8 99,574.9 95.6,571.8 92.5,568.4 89.6,564.8 86.9,561.1 84.4,557.2 82.3,553.1 80.4,548.9 78.7,544.6 77.4,540.1 76.4,535.7 75.6,531.1 75.1,526.5 75,521.9 75.1,517.3 75.6,512.7 76.4,508.1 77.4,503.7 78.7,499.2 80.4,494.9 82.3,490.7 84.4,486.6 86.9,482.7 89.6,479 92.5,475.4 95.6,472 99,468.9 102.6,466 106.3,463.3 110.2,460.8 114.3,458.7 118.5,456.8 122.8,455.1 127.3,453.8 131.7,452.8 136.3,452 140.9,451.5 145.5,451.4 150.1,451.5 154.7,452 159.3,452.8 163.7,453.8 168.2,455.1 172.5,456.8 176.7,458.7 180.8,460.8 184.7,463.3 188.4,466 192,468.9 195.4,472 198.5,475.4 201.4,479 204.1,482.7 206.6,486.6 208.7,490.7 210.6,494.9 212.3,499.2 213.6,503.7 214.6,508.1 215.4,512.7 215.9,517.3M216,298.1 215.9,302.7 215.4,307.3 214.6,311.9 213.6,316.3 212.3,320.8 210.6,325.1 208.7,329.3 206.6,333.4 204.1,337.3 201.4,341 198.5,344.6 195.4,348 192,351.1 188.4,354 184.7,356.7 180.8,359.2 176.7,361.3 172.5,363.2 168.2,364.9 163.7,366.2 159.3,367.2 154.7,368 150.1,368.5 145.5,368.6 140.9,368.5 136.3,368 131.7,367.2 127.3,366.2 122.8,364.9 118.5,363.2 114.3,361.3 110.2,359.2 106.3,356.7 102.6,354 99,351.1 95.6,348 92.5,344.6 89.6,341 86.9,337.3 84.4,333.4 82.3,329.3 80.4,325.1 78.7,320.8 77.4,316.3 76.4,311.9 75.6,307.3 75.1,302.7 75,298.1 75.1,293.5 75.6,288.9 76.4,284.3 77.4,279.9 78.7,275.4 80.4,271.1 82.3,266.9 84.4,262.8 86.9,258.9 89.6,255.2 92.5,251.6 95.6,248.2 99,245.1 102.6,242.2 106.3,239.5 110.2,237 114.3,234.9 118.5,233 122.8,231.3 127.3,230 131.7,229 136.3,228.2 140.9,227.7 145.5,227.6 150.1,227.7 154.7,228.2 159.3,229 163.7,230 168.2,231.3 172.5,233 176.7,234.9 180.8,237 184.7,239.5 188.4,242.2 192,245.1 195.4,248.2 198.5,251.6 201.4,255.2 204.1,258.9 206.6,262.8 208.7,266.9 210.6,271.1 212.3,275.4 213.6,279.9 214.6,284.3 215.4,288.9 215.9,293.5 216,298.1M219.5,517 219.7,521.9 219.5,526.8 219.1,531.6 218.3,536.4 217.2,541.1 215.8,545.8 214.1,550.3 212.1,554.7 209.8,559 207.2,563.1 204.4,567.1 201.3,570.8 198,574.4 194.4,577.7 190.7,580.8 186.7,583.6 182.6,586.2 178.3,588.5 173.9,590.5 169.4,592.2 164.7,593.6 160,594.7 155.2,595.5 150.4,595.9 145.5,596.1 140.6,595.9 135.8,595.5 131,594.7 126.3,593.6 121.6,592.2 117.1,590.5 112.7,588.5 108.4,586.2 104.3,583.6 100.3,580.8 96.6,577.7 93,574.4 89.7,570.8 86.6,567.1 83.8,563.1 81.2,559 78.9,554.7 76.9,550.3 75.2,545.8 73.8,541.1 72.7,536.4 71.9,531.6 71.5,526.8 71.3,521.9 71.5,517 71.9,512.2 72.7,507.4 73.8,502.7 75.2,498 76.9,493.5 78.9,489.1 81.2,484.8 83.8,480.7 86.6,476.7 89.7,473 93,469.4 96.6,466.1 100.3,463 104.3,460.2 108.4,457.6 112.7,455.3 117.1,453.3 121.6,451.6 126.3,450.2 131,449.1 135.8,448.3 140.6,447.9 145.5,447.7 150.4,447.9 155.2,448.3 160,449.1 164.7,450.2 169.4,451.6 173.9,453.3 178.3,455.3 182.6,457.6 186.7,460.2 190.7,463 194.4,466.1 198,469.4 201.3,473 204.4,476.7 207.2,480.7 209.8,484.8 212.1,489.1 214.1,493.5 215.8,498 217.2,502.7 218.3,507.4 219.1,512.2 219.5,517M219.7,298.1 219.5,303 219.1,307.8 218.3,312.6 217.2,317.3 215.8,322 214.1,326.5 212.1,330.9 209.8,335.2 207.2,339.3 204.4,343.3 201.3,347 198,350.6 194.4,353.9 190.7,357 186.7,359.8 182.6,362.4 178.3,364.7 173.9,366.7 169.4,368.4 164.7,369.8 160,370.9 155.2,371.7 150.4,372.1 145.5,372.3 140.6,372.1 135.8,371.7 131,370.9 126.3,369.8 121.6,368.4 117.1,366.7 112.7,364.7 108.4,362.4 104.3,359.8 100.3,357 96.6,353.9 93,350.6 89.7,347 86.6,343.3 83.8,339.3 81.2,335.2 78.9,330.9 76.9,326.5 75.2,322 73.8,317.3 72.7,312.6 71.9,307.8 71.5,303 71.3,298.1 71.5,293.2 71.9,288.4 72.7,283.6 73.8,278.9 75.2,274.2 76.9,269.7 78.9,265.3 81.2,261 83.8,256.9 86.6,252.9 89.7,249.2 93,245.6 96.6,242.3 100.3,239.2 104.3,236.4 108.4,233.8 112.7,231.5 117.1,229.5 121.6,227.8 126.3,226.4 131,225.3 135.8,224.5 140.6,224.1 145.5,223.9 150.4,224.1 155.2,224.5 160,225.3 164.7,226.4 169.4,227.8 173.9,229.5 178.3,231.5 182.6,233.8 186.7,236.4 190.7,239.2 194.4,242.3 198,245.6 201.3,249.2 204.4,252.9 207.2,256.9 209.8,261 212.1,265.3 214.1,269.7 215.8,274.2 217.2,278.9 218.3,283.6 219.1,288.4 219.5,293.2 219.7,298.1M129,376.5 129.2,374.2 125.3,373.4 120.5,371.9 115.7,370.1 111,368 106.5,365.6 102.2,362.9 98.1,359.9 94.1,356.7 90.4,353.2 86.9,349.5 83.7,345.5 80.7,341.4 78,337.1 75.6,332.6 73.5,327.9 71.7,323.1 70.2,318.3 69.1,313.3 68.3,308.3 67.8,303.2 67.6,298.1 67.8,293 68.3,287.9 69.1,282.9 70.2,277.9 71.7,273.1 73.5,268.3 75.6,263.6 78,259.1 80.7,254.8 83.7,250.7 86.9,246.7 90.4,243 94.1,239.5 98.1,236.3 102.2,233.3 106.5,230.6 111,228.2 115.7,226.1 120.5,224.3 125.3,222.8 130.3,221.7 135.3,220.9 140.4,220.4 145.5,220.2 150.6,220.4 155.7,220.9 160.7,221.7 165.7,222.8 170.5,224.3 175.3,226.1 180,228.2 184.5,230.6 188.8,233.3 192.9,236.3 196.9,239.5 200.6,243 204.1,246.7 207.3,250.7 210.3,254.8 213,259.1 215.4,263.6 217.5,268.3 219.3,273.1 220.8,277.9 221.9,282.9 222.7,287.9 223.2,293 223.4,298.1 223.2,303.2 222.7,308.3 221.9,313.3 220.8,318.3 219.3,323.1 217.5,327.9 215.4,332.6 213,337.1 210.3,341.4 207.3,345.5 204.1,349.5 200.6,353.2 196.9,356.7 192.9,359.9 188.8,362.9 184.5,365.6 180,368 175.3,370.1 170.5,371.9 165.7,373.4 161.8,374.2 162,376.5M162,443.5 161.8,445.8 165.7,446.6 170.5,448.1 175.3,449.9 180,452 184.5,454.4 188.8,457.1 192.9,460.1 196.9,463.3 200.6,466.8 204.1,470.5 207.3,474.5 210.3,478.6 213,482.9 215.4,487.4 217.5,492.1 219.3,496.9 220.8,501.7 221.9,506.7 222.7,511.7 223.2,516.8 223.4,521.9 223.2,527 222.7,532.1 221.9,537.1 220.8,542.1 219.3,546.9 217.5,551.7 215.4,556.4 213,560.9 210.3,565.2 207.3,569.3 204.1,573.3 200.6,577 196.9,580.5 192.9,583.7 188.8,586.7 184.5,589.4 180,591.8 175.3,593.9 170.5,595.7 165.7,597.2 160.7,598.3 155.7,599.1 150.6,599.6 145.5,599.8 140.4,599.6 135.3,599.1 130.3,598.3 125.3,597.2 120.5,595.7 115.7,593.9 111,591.8 106.5,589.4 102.2,586.7 98.1,583.7 94.1,580.5 90.4,577 86.9,573.3 83.7,569.3 80.7,565.2 78,560.9 75.6,556.4 73.5,551.7 71.7,546.9 70.2,542.1 69.1,537.1 68.3,532.1 67.8,527 67.6,521.9 67.8,516.8 68.3,511.7 69.1,506.7 70.2,501.7 71.7,496.9 73.5,492.1 75.6,487.4 78,482.9 80.7,478.6 83.7,474.5 86.9,470.5 90.4,466.8 94.1,463.3 98.1,460.1 102.2,457.1 106.5,454.4 111,452 115.7,449.9 120.5,448.1 125.3,446.6 129.2,445.8 129,443.5M176.3,220.5 175.9,222.3 181.6,224.9 186.3,227.4 190.8,230.2 195.2,233.4 199.3,236.7 203.2,240.4 206.9,244.3 210.2,248.4 213.4,252.8 216.2,257.3 218.7,262 220.9,266.9 222.8,271.9 224.3,277 225.5,282.2 226.4,287.4 226.9,292.8 227.1,298.1 226.9,303.4 226.4,308.8 225.5,314 224.3,319.2 222.8,324.3 220.9,329.3 218.7,334.2 216.2,338.9 213.4,343.4 210.2,347.8 206.9,351.9 203.2,355.8 199.3,359.5 195.2,362.8 190.8,366 186.3,368.8 182.2,371 182.6,372.5M182.6,447.5 182.2,449 186.3,451.2 190.8,454 195.2,457.2 199.3,460.5 203.2,464.2 206.9,468.1 210.2,472.2 213.4,476.6 216.2,481.1 218.7,485.8 220.9,490.7 222.8,495.7 224.3,500.8 225.5,506 226.4,511.2 226.9,516.6 227.1,521.9 226.9,527.2 226.4,532.6 225.5,537.8 224.3,543 222.8,548.1 220.9,553.1 218.7,558 216.2,562.7 213.4,567.2 210.2,571.6 206.9,575.7 203.2,579.6 199.3,583.3 195.2,586.6 190.8,589.8 186.3,592.6 181.6,595.1 176.1,597.6 176.5,599.5M114.5,599.5 114.9,597.6 109.4,595.1 104.7,592.6 100.2,589.8 95.8,586.6 91.7,583.3 87.8,579.6 84.1,575.7 80.8,571.6 77.6,567.2 74.8,562.7 72.3,558 70.1,553.1 68.2,548.1 66.7,543 65.5,537.8 64.6,532.6 64.1,527.2 63.9,521.9 64.1,516.6 64.6,511.2 65.5,506 66.7,500.8 68.2,495.7 70.1,490.7 72.3,485.8 74.8,481.1 77.6,476.6 80.8,472.2 84.1,468.1 87.8,464.2 91.7,460.5 95.8,457.2 100.2,454 104.7,451.2 108.8,449 108.4,447.5M108.4,372.5 108.8,371 104.7,368.8 100.2,366 95.8,362.8 91.7,359.5 87.8,355.8 84.1,351.9 80.8,347.8 77.6,343.4 74.8,338.9 72.3,334.2 70.1,329.3 68.2,324.3 66.7,319.2 65.5,314 64.6,308.8 64.1,303.4 63.9,298.1 64.1,292.8 64.6,287.4 65.5,282.2 66.7,277 68.2,271.9 70.1,266.9 72.3,262 74.8,257.3 77.6,252.8 80.8,248.4 84.1,244.3 87.8,240.4 91.7,236.7 95.8,233.4 100.2,230.2 104.7,227.4 109.4,224.9 115.1,222.3 114.7,220.5" fill="none" stroke="#b40000" stroke-width="0.99"/>
</svg>
<div class="abs" style="left:602px;top:111px;width:3px;height:530px;background:#c6c6c6;border-radius:1.5px"></div>
<div class="abs" style="left:602px;top:645px;width:3px;height:44px;background:#3a84f7;border-radius:1.5px"></div>
<div class="abs" style="left:595px;top:632.5px;width:17px;height:17px;box-sizing:border-box;border-radius:50%;background:#fff;border:1px solid #c2c2c2;box-shadow:0 0.5px 1px rgba(0,0,0,.25)"></div>
<div id="zval" class="t" style="left:591.00px;top:698.19px;font:11px/14px 'Liberation Sans', sans-serif;color:#141414;letter-spacing:0.660px;">1.35</div>
<div class="segc abs" style="left:215px;top:724px;width:216px;height:20.5px">
<div class="seg div" style="left:39.6px;width:1px"></div>
<div class="seg div" style="left:79.7px;width:1px"></div>
<div class="seg div sel" style="left:149.6px;width:67px"></div>
</div>
<div id="bt0" class="t" style="left:228.00px;top:726.00px;font:13px/17px 'Liberation Sans', sans-serif;color:#000;letter-spacing:0.630px;-webkit-text-stroke-width:0.1px;">3D</div>
<div id="bt1" class="t" style="left:268.80px;top:726.00px;font:13px/17px 'Liberation Sans', sans-serif;color:#000;letter-spacing:0.360px;-webkit-text-stroke-width:0.1px;">2D</div>
<div id="bt2" class="t" style="left:307.20px;top:726.00px;font:13px/17px 'Liberation Sans', sans-serif;color:#000;letter-spacing:0.225px;-webkit-text-stroke-width:0.1px;">Preview</div>
<div id="bt3" class="t" style="left:378.00px;top:726.00px;font:13px/17px 'Liberation Sans', sans-serif;color:#000;letter-spacing:-0.054px;-webkit-text-stroke-width:0.1px;">Layers</div>
<div id="l0" class="t" style="left:642.00px;top:109.19px;font:11px/14px 'Liberation Sans', sans-serif;color:#0a0a0a;letter-spacing:0.450px;">Print settings:</div>
<div id="l1" class="t" style="left:666.60px;top:138.19px;font:11px/14px 'Liberation Sans', sans-serif;color:#0a0a0a;letter-spacing:0.338px;">Filament:</div>
<div id="l2" class="t" style="left:675.60px;top:167.19px;font:11px/14px 'Liberation Sans', sans-serif;color:#0a0a0a;letter-spacing:0.514px;">Printer:</div>
<div class="combo" style="top:105px"><div style="position:absolute;left:3.8px;top:1.9px;width:16px;height:16px"><svg width="16" height="16" viewBox="0 0 16 16" style="position:absolute;left:0;top:0;overflow:visible;"><g opacity="1"><path d="M6.69 2.55 L6.92 0.38 L9.08 0.38 L9.31 2.55 L10.93 3.23 L12.62 1.84 L14.16 3.38 L12.77 5.07 L13.45 6.69 L15.62 6.92 L15.62 9.08 L13.45 9.31 L12.77 10.93 L14.16 12.62 L12.62 14.16 L10.93 12.77 L9.31 13.45 L9.08 15.62 L6.92 15.62 L6.69 13.45 L5.07 12.77 L3.38 14.16 L1.84 12.62 L3.23 10.93 L2.55 9.31 L0.38 9.08 L0.38 6.92 L2.55 6.69 L3.23 5.07 L1.84 3.38 L3.38 1.84 L5.07 3.23ZM10.8 8A2.8 2.8 0 1 0 5.2 8A2.8 2.8 0 1 0 10.8 8Z" fill="#c6c6c6" stroke="#a0a0a0" stroke-width="0.8" fill-rule="evenodd" stroke-linejoin="round"/><circle cx="8" cy="8" r="4.199999999999999" fill="none" stroke="#e6e6e6" stroke-width="1.2"/></g></svg></div></div>
<div id="c0" class="t" style="left:752.60px;top:107.50px;font:13px/17px 'Liberation Sans', sans-serif;color:#000;letter-spacing:0.293px;-webkit-text-stroke-width:0.1px;">0.10mm DETAIL (modified)</div>
<div class="dd" style="top:105.5px"><svg width="18" height="18" viewBox="0 0 18 18" style="position:absolute;left:0;top:0"><path d="M6 7.5 L9 10.4 L12 7.5" fill="none" stroke="#2a2a2a" stroke-width="1.35" stroke-linecap="round" stroke-linejoin="round"/></svg></div>
<div class="combo" style="top:134px"><div style="position:absolute;left:4px;top:2px;width:16px;height:15.5px;background:#888000"></div></div>
<div id="c1" class="t" style="left:752.60px;top:136.50px;font:13px/17px 'Liberation Sans', sans-serif;color:#000;letter-spacing:-0.214px;-webkit-text-stroke-width:0.1px;">Rebel PLA</div>
<div class="dd" style="top:134.5px"><svg width="18" height="18" viewBox="0 0 18 18" style="position:absolute;left:0;top:0"><path d="M6 7.5 L9 10.4 L12 7.5" fill="none" stroke="#2a2a2a" stroke-width="1.35" stroke-linecap="round" stroke-linejoin="round"/></svg></div>
<div class="combo" style="top:163px"><div style="position:absolute;left:3.6px;top:1.5px;width:16px;height:16px"><svg width="16" height="16" viewBox="0 0 16 16" style="position:absolute;left:0;top:0;overflow:visible;"><path d="M3.6 2.4 H12.4 V6 H3.6Z" fill="#f4f4f4" stroke="#8a8a8a" stroke-width="0.8"/><rect x="0.9" y="5.2" width="14.2" height="7.8" rx="2" fill="#dedede" stroke="#5c5c5c" stroke-width="0.9"/><rect x="3" y="7.6" width="10" height="4.6" fill="#f6f6f6" stroke="#8c8c8c" stroke-width="0.7"/><path d="M3.4 12.6 H12.6" stroke="#3c3c3c" stroke-width="1.1"/></svg></div></div>
<div id="c2" class="t" style="left:752.60px;top:165.50px;font:13px/17px 'Liberation Sans', sans-serif;color:#000;letter-spacing:0.138px;-webkit-text-stroke-width:0.1px;">Rebel II 0.4 S13</div>
<div class="dd" style="top:163.5px"><svg width="18" height="18" viewBox="0 0 18 18" style="position:absolute;left:0;top:0"><path d="M6 7.5 L9 10.4 L12 7.5" fill="none" stroke="#2a2a2a" stroke-width="1.35" stroke-linecap="round" stroke-linejoin="round"/></svg></div>
<div class="btn" style="left:741px;width:110px"><div style="position:absolute;left:4.6px;top:2.6px;width:16px;height:16px"><svg width="16" height="16" viewBox="0 0 16 16" style="position:absolute;left:0;top:0;overflow:visible;"><g opacity="1"><path d="M0.3 4.0 L7.5 1.4 L15.3 4.2 L15.3 10.5 L7.9 14.6 L0.3 9.9Z" fill="#f6f6f6" stroke="#a4a4a4" stroke-width="0.7" stroke-linejoin="round"/><path d="M0.3 4.0 L7.9 8.0 L7.9 14.6 L0.3 9.9Z" fill="#e2e2e2"/><path d="M7.9 8.0 L15.3 4.2 L15.3 10.5 L7.9 14.6Z" fill="#d6d6d6"/><path d="M0.3 4.0 L7.5 1.4 L15.3 4.2 L7.9 8.0Z" fill="#f4f4f4"/><path d="M5.75 1.3 v1.5 a1.75 0.85 0 0 0 3.5 0 v-1.5z" fill="#d8d8d8" stroke="#a8a8a8" stroke-width="0.4"/><ellipse cx="7.5" cy="1.3" rx="1.75" ry="0.85" fill="#ffffff" stroke="#b4b4b4" stroke-width="0.35"/><path d="M1.75 3.3 v1.5 a1.75 0.85 0 0 0 3.5 0 v-1.5z" fill="#d8d8d8" stroke="#a8a8a8" stroke-width="0.4"/><ellipse cx="3.5" cy="3.3" rx="1.75" ry="0.85" fill="#ffffff" stroke="#b4b4b4" stroke-width="0.35"/><path d="M9.85 3.4 v1.5 a1.75 0.85 0 0 0 3.5 0 v-1.5z" fill="#d8d8d8" stroke="#a8a8a8" stroke-width="0.4"/><ellipse cx="11.6" cy="3.4" rx="1.75" ry="0.85" fill="#ffffff" stroke="#b4b4b4" stroke-width="0.35"/><path d="M5.85 5.5 v1.5 a1.75 0.85 0 0 0 3.5 0 v-1.5z" fill="#d8d8d8" stroke="#a8a8a8" stroke-width="0.4"/><ellipse cx="7.6" cy="5.5" rx="1.75" ry="0.85" fill="#ffffff" stroke="#b4b4b4" stroke-width="0.35"/></g><g transform="translate(5.6,6.9)"><path d="M0.5 2.6 H4.6 V0.4 L9.6 4.5 L4.6 8.6 V6.4 H0.5Z" fill="#8fd36c" stroke="#2f8f12" stroke-width="1" stroke-linejoin="round"/></g></svg></div></div>
<div class="btn" style="left:855px;width:132px"><div style="position:absolute;left:4.6px;top:2.6px;width:16px;height:16px"><svg width="16" height="16" viewBox="0 0 16 16" style="position:absolute;left:0;top:0;overflow:visible;"><g opacity="1"><path d="M6.67 2.46 L6.92 0.38 L9.08 0.38 L9.33 2.46 L10.98 3.14 L12.62 1.84 L14.16 3.38 L12.86 5.02 L13.54 6.67 L15.62 6.92 L15.62 9.08 L13.54 9.33 L12.86 10.98 L14.16 12.62 L12.62 14.16 L10.98 12.86 L9.33 13.54 L9.08 15.62 L6.92 15.62 L6.67 13.54 L5.02 12.86 L3.38 14.16 L1.84 12.62 L3.14 10.98 L2.46 9.33 L0.38 9.08 L0.38 6.92 L2.46 6.67 L3.14 5.02 L1.84 3.38 L3.38 1.84 L5.02 3.14ZM10.5 8A2.5 2.5 0 1 0 5.5 8A2.5 2.5 0 1 0 10.5 8Z" fill="#d2d2d2" stroke="#aaaaaa" stroke-width="0.8" fill-rule="evenodd" stroke-linejoin="round"/><circle cx="8" cy="8" r="3.9" fill="none" stroke="#e6e6e6" stroke-width="1.2"/></g><g transform="translate(5.6,6.9)"><path d="M0.5 2.6 H4.6 V0.4 L9.6 4.5 L4.6 8.6 V6.4 H0.5Z" fill="#8fd36c" stroke="#2f8f12" stroke-width="1" stroke-linejoin="round"/></g></svg></div></div>
<div id="e0" class="t" style="left:766.40px;top:194.80px;font:13px/17px 'Liberation Sans', sans-serif;color:#000;letter-spacing:0.127px;-webkit-text-stroke-width:0.1px;">Export STL...</div>
<div id="e1" class="t" style="left:880.20px;top:194.80px;font:13px/17px 'Liberation Sans', sans-serif;color:#000;letter-spacing:0.336px;-webkit-text-stroke-width:0.1px;">Export G-code...</div>
<div id="list" class="abs"></div><div id="lhead" class="abs"></div>
<div class="hsep" style="left:785.5px"></div>
<div class="hsep" style="left:831px"></div>
<div class="hsep" style="left:882px"></div>
<div id="h0" class="t" style="left:645.00px;top:226.99px;font:11px/14px 'Liberation Sans', sans-serif;color:#0a0a0a;letter-spacing:0.150px;">Name</div>
<div id="h1" class="t" style="left:790.20px;top:226.99px;font:11px/14px 'Liberation Sans', sans-serif;color:#0a0a0a;letter-spacing:0.162px;">Copies</div>
<div id="h2" class="t" style="left:842.00px;top:226.99px;font:11px/14px 'Liberation Sans', sans-serif;color:#0a0a0a;letter-spacing:0.113px;">Scale</div>
<div id="row" class="abs"></div>
<div id="r0" class="t" style="left:641.52px;top:244.54px;font:10px/13px 'DejaVu Sans', 'Liberation Sans', sans-serif;color:#111;letter-spacing:0.015px;">sonic_box.stl</div>
<div id="r1" class="t" style="left:801.20px;top:244.54px;font:10px/13px 'DejaVu Sans', 'Liberation Sans', sans-serif;color:#111;letter-spacing:0.000px;">1</div>
<div id="r2" class="t" style="left:839.32px;top:244.54px;font:10px/13px 'DejaVu Sans', 'Liberation Sans', sans-serif;color:#111;letter-spacing:-1.050px;">100%</div>
<div id="i0" class="t" style="left:651.80px;top:665.59px;font:11px/14px 'Liberation Sans', sans-serif;color:#0a0a0a;letter-spacing:0.240px;">Info</div>
<div id="info" class="abs"></div>
<div id="i1" class="t" style="left:651.80px;top:687.39px;font:11px/14px 'Liberation Sans', sans-serif;color:#0a0a0a;letter-spacing:0.292px;">Size:</div>
<div id="i2" class="t" style="left:651.80px;top:706.59px;font:11px/14px 'Liberation Sans', sans-serif;color:#0a0a0a;letter-spacing:0.255px;">Facets:</div>
<div id="i3" class="t" style="left:651.80px;top:725.79px;font:11px/14px 'Liberation Sans', sans-serif;color:#0a0a0a;letter-spacing:0.562px;">Manifold:</div>
<div id="i4" class="t" style="left:817.20px;top:687.39px;font:11px/14px 'Liberation Sans', sans-serif;color:#0a0a0a;letter-spacing:0.465px;">Volume:</div>
<div id="i5" class="t" style="left:817.20px;top:706.59px;font:11px/14px 'Liberation Sans', sans-serif;color:#0a0a0a;letter-spacing:0.500px;">Materials:</div>
<div id="statusline" class="abs"></div><div id="status" class="abs"></div>
</body></html>
